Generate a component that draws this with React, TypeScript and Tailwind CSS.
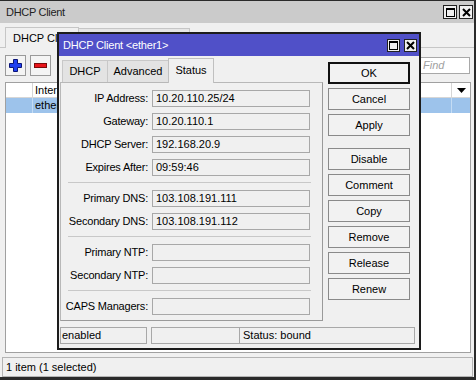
import type React from 'react';

const fieldRows: { label: string; value: string }[][] = [
  [
    { label: 'IP Address:', value: '10.20.110.25/24' },
    { label: 'Gateway:', value: '10.20.110.1' },
    { label: 'DHCP Server:', value: '192.168.20.9' },
    { label: 'Expires After:', value: '09:59:46' },
  ],
  [
    { label: 'Primary DNS:', value: '103.108.191.111' },
    { label: 'Secondary DNS:', value: '103.108.191.112' },
  ],
  [
    { label: 'Primary NTP:', value: '' },
    { label: 'Secondary NTP:', value: '' },
  ],
  [{ label: 'CAPS Managers:', value: '' }],
];

const MaxIcon: React.FC = () => (
  <svg width="9" height="9" viewBox="0 0 9 9">
    <rect x="0.5" y="0.5" width="8" height="8" fill="none" stroke="#000" />
    <rect x="0" y="0" width="9" height="2" fill="#000" />
  </svg>
);

const CloseIcon: React.FC = () => (
  <svg width="9" height="9" viewBox="0 0 9 9">
    <path d="M1 1 L8 8 M8 1 L1 8" stroke="#000" strokeWidth="2" />
  </svg>
);

const TitleButton: React.FC<{ children: React.ReactNode; size: string }> = ({ children, size }) => (
  <div className={`${size} flex items-center justify-center border border-[#222] bg-[#f0f0f0]`}>{children}</div>
);

const DialogButton: React.FC<{ label: string; primary?: boolean }> = ({ label, primary }) => (
  <div
    className={`h-[22px] w-[82px] flex items-center justify-center bg-[#f2f2f2] ${
      primary ? 'border-2 border-[#111]' : 'border border-[#8a8a8a]'
    }`}
  >
    {label}
  </div>
);

const Field: React.FC<{ label: string; value: string }> = ({ label, value }) => (
  <div className="flex items-center h-[17px]">
    <div className="w-[88px] text-right pr-[1px] tracking-[-0.2px]">{label}</div>
    <div className="ml-[3px] w-[158px] h-[17px] border border-[#a8a8a8] bg-[#f0f0f0] flex items-center pl-[3px]">
      {value}
    </div>
  </div>
);

const Dialog: React.FC = () => (
  <div className="absolute z-20 left-[57px] top-[31px] w-[364px] h-[318px] border-2 border-[#1c1c1c] bg-[#f0f0f0] flex flex-col">
    <div className="h-[22px] bg-[#5050c8] flex items-center pl-[4px] pr-[2px] text-white">
      <span className="tracking-[-0.2px]">DHCP Client &lt;ether1&gt;</span>
      <div className="ml-auto flex gap-[4px] items-center">
        <TitleButton size="w-[13px] h-[13px]">
          <MaxIcon />
        </TitleButton>
        <TitleButton size="w-[13px] h-[13px]">
          <CloseIcon />
        </TitleButton>
      </div>
    </div>
    <div className="flex pt-[1px]">
      <div className="flex flex-col ml-[1px]">
        <div className="flex items-end h-[25px] pl-[2px]">
          <div className="w-[45px] h-[22px] border-l border-t border-[#c8c8c8] bg-[#e3e3e3] flex items-center justify-center">
            DHCP
          </div>
          <div className="w-[61px] h-[22px] border-l border-t border-[#c8c8c8] bg-[#e3e3e3] flex items-center justify-center">
            Advanced
          </div>
          <div className="w-[46px] h-[25px] border-l border-t border-r border-[#c0c0c0] bg-[#f0f0f0] flex items-center justify-center pb-[2px] -mb-px relative z-10">
            Status
          </div>
        </div>
        <div className="w-[263px] h-[239px] border border-[#b8b8b8] border-r-[#9a9a9a] border-b-[#9a9a9a] flex flex-col pt-[7px]">
          {fieldRows.map((group, gi) => (
            <div key={gi} className="flex flex-col">
              {gi > 0 && <div className="ml-[7px] w-[243px] h-px bg-[#c8c8c8] mt-[6px] mb-[7px]" />}
              <div className="flex flex-col gap-[6px]">
                {group.map((f) => (
                  <Field key={f.label} label={f.label} value={f.value} />
                ))}
              </div>
            </div>
          ))}
        </div>
      </div>
      <div className="flex flex-col ml-[5px] mt-[5px] gap-[4px]">
        <DialogButton label="OK" primary />
        <DialogButton label="Cancel" />
        <DialogButton label="Apply" />
        <div className="h-[4px]" />
        <DialogButton label="Disable" />
        <DialogButton label="Comment" />
        <DialogButton label="Copy" />
        <DialogButton label="Remove" />
        <DialogButton label="Release" />
        <DialogButton label="Renew" />
      </div>
    </div>
    <div className="flex h-[17px] mt-[6px] ml-[1px] mr-[4px]">
      <div className="w-[87px] border border-[#a8a8a8] flex items-center pl-[1px]">enabled</div>
      <div className="w-[89px] ml-[4px] border border-[#a8a8a8]" />
      <div className="flex-1 border border-l-0 border-[#a8a8a8] flex items-center pl-[3px]">Status: bound</div>
    </div>
  </div>
);

const App: React.FC = () => {
  return (
    <div className="w-[476px] h-[380px] relative overflow-hidden bg-[#f0f0f0] border-t border-r-2 border-b-[3px] border-[#2a2a2a] text-[11px] text-black font-['Liberation_Sans',Arial,sans-serif] flex flex-col">
      <div className="h-[22px] bg-[#cbcbcb] flex items-center pl-[6px] pr-[1px] shrink-0">
        <span className="text-[#222] tracking-[-0.3px]">DHCP Client</span>
        <div className="ml-auto flex gap-[2px] items-center">
          <TitleButton size="w-[14px] h-[14px]">
            <MaxIcon />
          </TitleButton>
          <TitleButton size="w-[14px] h-[14px]">
            <CloseIcon />
          </TitleButton>
        </div>
      </div>
      <div className="h-[24px] flex items-end pl-[5px] shrink-0">
        <div className="w-[74px] h-[21px] border-l border-t border-r border-[#c6c6c6] flex items-center pl-[7px] -mb-px bg-[#f0f0f0] relative z-10">
          DHCP Client
        </div>
        <div className="w-[111px] h-[19px] border-t border-r border-[#c6c6c6] bg-[#e6e6e6]" />
      </div>
      <div className="border-t border-[#c6c6c6] flex flex-col pl-[5px] pr-[2px] shrink-0">
        <div className="mt-[7px] h-[21px] flex items-center gap-[4px]">
          <div className="w-[21px] h-[21px] border border-[#9a9a9a] bg-[#f4f4f4] flex items-center justify-center">
            <svg width="13" height="13" viewBox="0 0 13 13">
              <path
                d="M4.5 0.5 H8.5 V4.5 H12.5 V8.5 H8.5 V12.5 H4.5 V8.5 H0.5 V4.5 H4.5 Z"
                fill="#1f3ff0"
                stroke="#0a1478"
                strokeWidth="1"
              />
            </svg>
          </div>
          <div className="w-[21px] h-[21px] border border-[#9a9a9a] bg-[#f4f4f4] flex items-center justify-center">
            <svg width="13" height="5" viewBox="0 0 13 5">
              <rect x="0.5" y="0.5" width="12" height="4" fill="#e8141a" stroke="#7a0a0a" strokeWidth="1" />
            </svg>
          </div>
          <div className="ml-auto mr-[2px] w-[51px] h-[17px] border border-[#a8a8a8] bg-white flex items-center pl-[3px] italic text-[#a0a0a0]">
            Find
          </div>
        </div>
        <div className="mt-[6px] mr-[1px] h-[271px] border border-[#a0a0a0] bg-white flex flex-col">
          <div className="h-[15px] flex border-b border-[#d6d6d6]">
            <div className="w-[27px] border-r border-[#d6d6d6]" />
            <div className="flex-1 border-r border-[#d6d6d6] flex items-center pl-[2px]">Interface</div>
            <div className="w-[18px] flex items-center justify-center">
              <svg width="9" height="5" viewBox="0 0 9 5">
                <path d="M0 0 H9 L4.5 5 Z" fill="#000" />
              </svg>
            </div>
          </div>
          <div className="h-[15px] flex bg-[#9dc3eb]">
            <div className="w-[27px] border-r border-[#c4dcf4]" />
            <div className="flex-1 border-r border-[#c4dcf4] flex items-center pl-[2px]">ether1</div>
            <div className="w-[18px]" />
          </div>
        </div>
      </div>
      <div className="mt-[4px] ml-[2px] mr-[1px] h-[20px] border border-[#b4b4b4] flex items-center pl-[3px] shrink-0">
        1 item (1 selected)
      </div>
      <Dialog />
    </div>
  );
};

export default App;
